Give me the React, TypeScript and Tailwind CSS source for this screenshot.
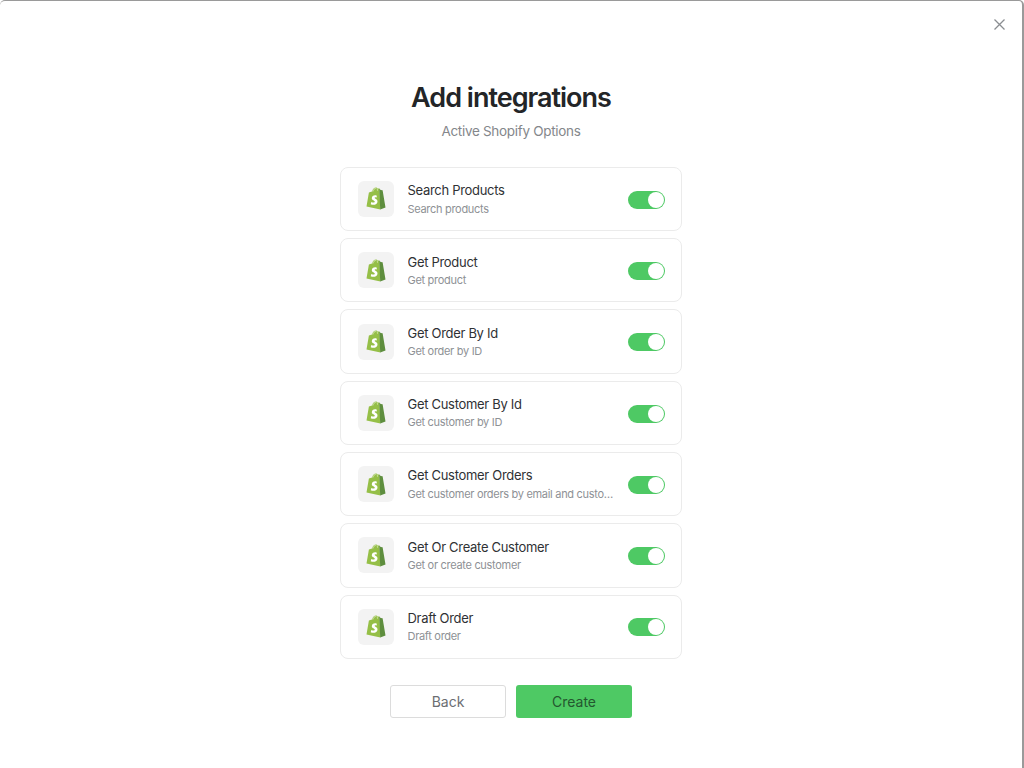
const rows = [
  { title: "Search Products", desc: "Search products" },
  { title: "Get Product", desc: "Get product" },
  { title: "Get Order By Id", desc: "Get order by ID" },
  { title: "Get Customer By Id", desc: "Get customer by ID" },
  { title: "Get Customer Orders", desc: "Get customer orders by email and customer ID" },
  { title: "Get Or Create Customer", desc: "Get or create customer" },
  { title: "Draft Order", desc: "Draft order" },
];

function ShopifyIcon() {
  return (
    <svg width="20" height="23" viewBox="0 0 20 23" fill="none">
      {/* bag */}
      <path d="M0.5 19.6 L2.9 5.6 L6 4.6 C6.8 2 8.3 0.6 10 0.6 C10.8 0.6 11.3 1 11.6 1.6 L13.4 1.6 L14.4 22.4 Z" fill="#95BF47" />
      <path d="M13.2 1.5 L14.7 3 L16.6 3.2 L19.5 20.4 L14.2 22.4 Z" fill="#5E8E3E" />
      {/* handle */}
      <path d="M6.8 4.6 C7.4 2.6 8.5 1.4 9.8 1.3 M10.9 1.6 C11.4 2.4 11.6 3 11.6 3.7" stroke="#ffffff" strokeWidth="0.7" opacity="0.75" />
      {/* S mark */}
      <path d="M10.6 8.6 C8 7.8 5.8 9.2 5.8 11.2 C5.8 13.2 8.8 13.4 8.8 14.8 C8.8 15.8 7.2 15.9 5.3 15 L4.7 17.2 C7.8 18.6 11.5 17.4 11.5 14.4 C11.5 12.2 8.6 11.8 8.6 10.8 C8.6 10.2 9.4 9.9 10.9 10.5 Z" fill="#ffffff" />
    </svg>
  );
}

function Toggle() {
  return (
    <div className="w-[37px] h-[18px] mt-[1.5px] rounded-full bg-[#4ec964] flex items-center justify-end pr-px shrink-0">
      <div className="w-4 h-4 rounded-full bg-white" />
    </div>
  );
}

export default function App() {
  return (
    <div
      className="relative w-[1024px] h-[768px] bg-white overflow-hidden rounded-t-[5px] border-t border-r-2 border-[#9a9a9a] flex flex-col items-center text-[#26282b]"
      style={{ fontFamily: "Inter, 'Liberation Sans', sans-serif" }}
    >
      {/* close */}
      <button className="absolute top-[18px] right-[17px] w-[11px] h-[11px] text-[#8a8d91]">
        <svg width="11" height="11" viewBox="0 0 11 11" fill="none" stroke="currentColor" strokeWidth="1.3">
          <path d="M0.5 0.5 L10.5 10.5 M10.5 0.5 L0.5 10.5" />
        </svg>
      </button>

      <h1 className="mt-[78px] text-[27px] leading-[38px] font-semibold tracking-[-1px] text-[#232527]">Add integrations</h1>
      <p className="mt-1 text-[13.5px] leading-5 text-[#84878b] tracking-[-0.3px]">Active Shopify Options</p>

      <div className="mt-[25.8px] w-[342px] flex flex-col gap-[7px]">
        {rows.map((r) => (
          <div key={r.title} className="h-[64.3px] rounded-lg border border-[#ebebeb] bg-white flex items-center pl-[17px] pr-4">
            <div className="w-9 h-9 rounded-md bg-[#f3f3f3] flex items-center justify-center shrink-0">
              <ShopifyIcon />
            </div>
            <div className="ml-[13.5px] w-[207px] min-w-0">
              <div className="text-[13px] leading-[18px] text-[#2f3134] tracking-[-0.3px] truncate">{r.title}</div>
              <div className="mt-[1.3px] text-[11px] leading-4 text-[#8e9195] tracking-[-0.3px] truncate">{r.desc}</div>
            </div>
            <div className="ml-auto">
              <Toggle />
            </div>
          </div>
        ))}
      </div>

      <div className="mt-[26px] flex gap-[10px]">
        <button className="w-[116px] h-[33px] pt-px rounded-[3px] border border-[#dcdcdc] bg-white text-sm text-[#6b6e72]">Back</button>
        <button className="w-[116px] h-[33px] pt-px rounded-[3px] bg-[#4ec964] text-sm text-[#24572f]">Create</button>
      </div>
    </div>
  );
}
